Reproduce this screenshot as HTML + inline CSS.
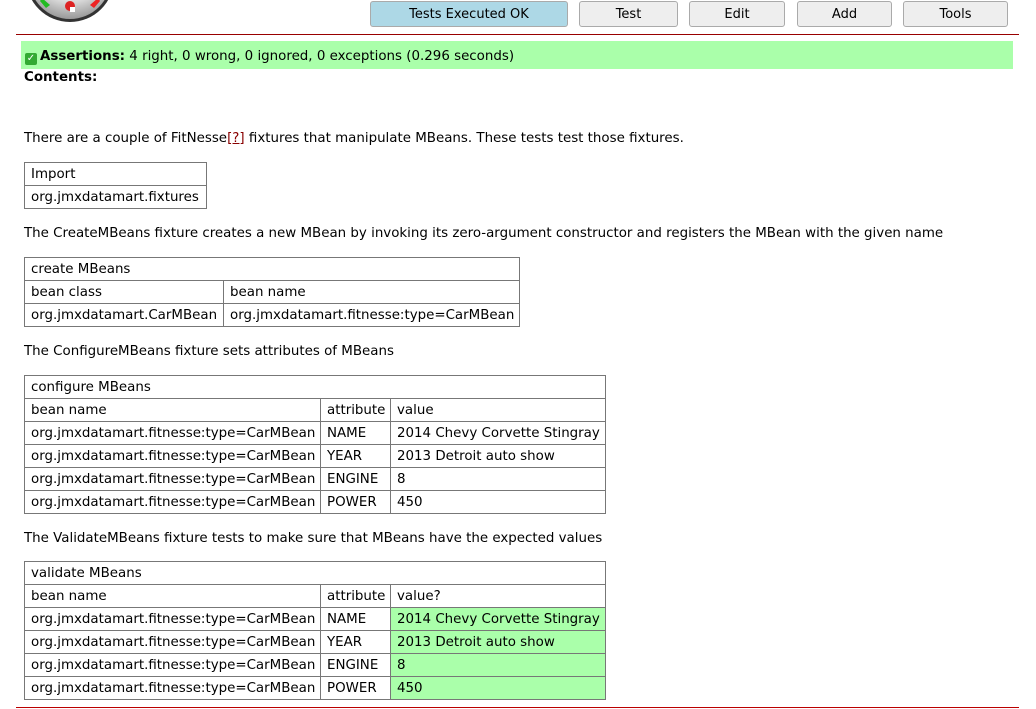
<!DOCTYPE html>
<html><head><meta charset="utf-8"><style>
*{margin:0;padding:0;box-sizing:border-box}
body{width:1036px;height:709px;overflow:hidden;background:#fff;font-family:"DejaVu Sans","Liberation Sans",sans-serif;font-size:13.4px;color:#000;position:relative}
.a{position:absolute;white-space:nowrap}
.btn{position:absolute;top:1px;height:26px;border:1px solid #aaa;border-radius:3px;background:#eee;text-align:center;line-height:25px;font-size:13px}
table{position:absolute;border-collapse:collapse;table-layout:fixed}
td{border:1px solid #777;height:23px;padding:1px 6px 0;white-space:nowrap;overflow:hidden;line-height:21px}
.p{background:#aaffaa}
</style></head><body>
<svg class="a" style="left:0;top:0" width="130" height="30">
<defs><radialGradient id="g" cx="0.5" cy="0.3" r="0.7"><stop offset="0.6" stop-color="#eee"/><stop offset="1" stop-color="#999"/></radialGradient></defs>
<circle cx="70" cy="-22" r="44" fill="#333"/>
<circle cx="70" cy="-22" r="41" fill="url(#g)"/>
<path d="M42 -2 L50 5 L46 8 L40 1Z" fill="#2b2"/>
<path d="M98 -2 L90 5 L94 8 L100 1Z" fill="#e22"/>
<circle cx="70" cy="6" r="5" fill="#d22"/>
<rect x="70" y="7" width="5" height="5" fill="#fff"/>
</svg>
<div class="btn" style="left:370px;width:198px;background:#add8e6">Tests Executed OK</div>
<div class="btn" style="left:579px;width:99px">Test</div>
<div class="btn" style="left:689px;width:96px">Edit</div>
<div class="btn" style="left:797px;width:95px">Add</div>
<div class="btn" style="left:903px;width:105px">Tools</div>
<div class="a" style="left:16px;top:34px;width:1003px;height:1px;background:#900"></div>
<div class="a" style="left:21px;top:41px;width:992px;height:28px;background:#aaffaa"></div>
<div class="a" style="left:25px;top:49px;"><span style="display:inline-block;width:12px;height:12px;background:#3a3;color:#fff;font-size:10px;line-height:12px;text-align:center;vertical-align:-1px;border-radius:2px;margin-right:3px">✓</span><b>Assertions:</b> 4 right, 0 wrong, 0 ignored, 0 exceptions (0.296 seconds)</div>
<div class="a" style="left:24px;top:70px;font-weight:bold">Contents:</div>
<div class="a" style="left:24px;top:131px">There are a couple of FitNesse<span style="color:#800;text-decoration:underline">[?]</span> fixtures that manipulate MBeans. These tests test those fixtures.</div>
<table style="left:24px;top:162px;width:183px"><tr><td>Import</td></tr><tr><td>org.jmxdatamart.fixtures</td></tr></table>
<div class="a" style="left:24px;top:226px">The CreateMBeans fixture creates a new MBean by invoking its zero-argument constructor and registers the MBean with the given name</div>
<table style="left:24px;top:257px;width:495px"><col style="width:199px"><col style="width:296px">
<tr><td colspan="2">create MBeans</td></tr><tr><td>bean class</td><td>bean name</td></tr><tr><td>org.jmxdatamart.CarMBean</td><td>org.jmxdatamart.fitnesse:type=CarMBean</td></tr></table>
<div class="a" style="left:24px;top:344px">The ConfigureMBeans fixture sets attributes of MBeans</div>
<table style="left:24px;top:375px;width:581px"><col style="width:296px"><col style="width:70px"><col style="width:215px">
<tr><td colspan="3">configure MBeans</td></tr><tr><td>bean name</td><td>attribute</td><td>value</td></tr>
<tr><td>org.jmxdatamart.fitnesse:type=CarMBean</td><td>NAME</td><td>2014 Chevy Corvette Stingray</td></tr>
<tr><td>org.jmxdatamart.fitnesse:type=CarMBean</td><td>YEAR</td><td>2013 Detroit auto show</td></tr>
<tr><td>org.jmxdatamart.fitnesse:type=CarMBean</td><td>ENGINE</td><td>8</td></tr>
<tr><td>org.jmxdatamart.fitnesse:type=CarMBean</td><td>POWER</td><td>450</td></tr></table>
<div class="a" style="left:24px;top:531px">The ValidateMBeans fixture tests to make sure that MBeans have the expected values</div>
<table style="left:24px;top:561px;width:581px"><col style="width:296px"><col style="width:70px"><col style="width:215px">
<tr><td colspan="3">validate MBeans</td></tr><tr><td>bean name</td><td>attribute</td><td>value?</td></tr>
<tr><td>org.jmxdatamart.fitnesse:type=CarMBean</td><td>NAME</td><td class="p">2014 Chevy Corvette Stingray</td></tr>
<tr><td>org.jmxdatamart.fitnesse:type=CarMBean</td><td>YEAR</td><td class="p">2013 Detroit auto show</td></tr>
<tr><td>org.jmxdatamart.fitnesse:type=CarMBean</td><td>ENGINE</td><td class="p">8</td></tr>
<tr><td>org.jmxdatamart.fitnesse:type=CarMBean</td><td>POWER</td><td class="p">450</td></tr></table>
<div class="a" style="left:16px;top:707px;width:1003px;height:1px;background:#b00"></div>
</body></html>
